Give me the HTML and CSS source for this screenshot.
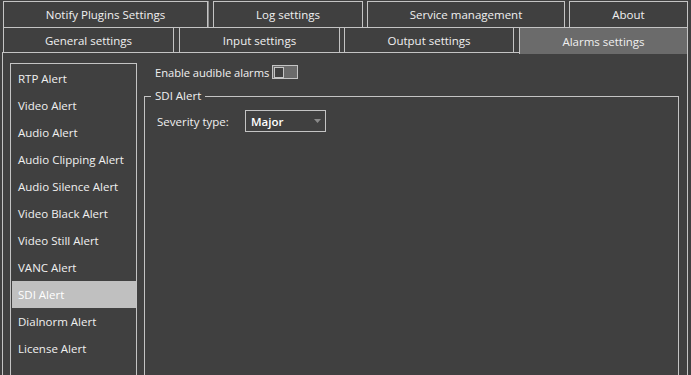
FILE: index.html
```html
<!DOCTYPE html>
<html>
<head>
<meta charset="utf-8">
<link rel="stylesheet" href="styles.css">
</head>
<body>
<div class="tabs">
  <div class="tab-row row1">
    <div class="tab t-notify">Notify Plugins Settings</div>
    <div class="tab t-log">Log settings</div>
    <div class="tab t-service">Service management</div>
    <div class="tab t-about">About</div>
  </div>
  <div class="tab-row row2">
    <div class="tab t-general">General settings</div>
    <div class="tab t-input">Input settings</div>
    <div class="tab t-output">Output settings</div>
    <div class="tab t-alarms selected">Alarms settings</div>
  </div>
</div>
<div class="pane">
  <div class="alert-list">
    <div class="item">RTP Alert</div>
    <div class="item">Video Alert</div>
    <div class="item">Audio Alert</div>
    <div class="item">Audio Clipping Alert</div>
    <div class="item">Audio Silence Alert</div>
    <div class="item">Video Black Alert</div>
    <div class="item">Video Still Alert</div>
    <div class="item">VANC Alert</div>
    <div class="item active">SDI Alert</div>
    <div class="item">Dialnorm Alert</div>
    <div class="item">License Alert</div>
  </div>
  <div class="content">
    <div class="enable-row">
      <span class="label enable-label">Enable audible alarms</span>
      <span class="toggle"><span class="knob"></span></span>
    </div>
    <fieldset class="group">
      <legend>SDI Alert</legend>
      <div class="severity-row">
        <span class="label sev-label">Severity type:</span>
        <div class="combo">
          <span class="combo-text">Major</span>
          <svg class="arrow" width="7" height="4" viewBox="0 0 7 4"><path d="M0 0 L7 0 L3.5 4 Z" fill="#8a8a8a"/></svg>
        </div>
      </div>
    </fieldset>
  </div>
</div>
</body>
</html>
```

FILE: styles.css
```css
html, body {
  margin: 0;
  padding: 0;
  background: #404040;
  overflow: hidden;
  height: 375px;
}
body {
  font-family: "Open Sans", "Noto Sans", sans-serif;
  font-size: 11.5px;
  color: #f0f0f0;
}
.tabs {
  padding-top: 1px;
}
.tab-row {
  display: flex;
  padding-left: 3px;
}
.tab {
  box-sizing: border-box;
  border: 1px solid #c4c4c4;
  background: #404040;
  display: flex;
  align-items: center;
  justify-content: center;
  white-space: nowrap;
}
.row1 .tab {
  height: 27px;
}
.row2 {
  margin-top: -1px;
}
.row2 .tab {
  height: 25px;
  border-bottom: none;
  padding-top: 1px;
}
.t-notify { width: 205px; margin-right: 5px; box-shadow: 1px 0 0 #8c8c8c; }
.t-log { width: 150px; margin-right: 4px; }
.t-service { width: 198px; margin-right: 4px; }
.t-about { width: 119px; }
.t-general { width: 171px; margin-right: 5px; }
.t-input { width: 161px; margin-right: 4px; }
.t-output { width: 170px; margin-right: 5px; }
.t-alarms { width: 169px; }
.row2 .tab.selected {
  background: #6b6b6b;
  height: 27px;
  margin-bottom: -2px;
  position: relative;
  z-index: 1;
}
.pane {
  margin-left: 2px;
  width: 686px;
  box-sizing: border-box;
  height: 323px;
  border: 1px solid #c4c4c4;
  border-bottom: none;
  padding: 10px 8px 0 7px;
  display: flex;
  gap: 7px;
}
.alert-list {
  box-sizing: border-box;
  width: 127px;
  flex: none;
  border: 1px solid #c4c4c4;
  border-bottom: none;
  padding: 1px 0 0 1px;
}
.item {
  height: 27px;
  line-height: 27px;
  padding-left: 6px;
  white-space: nowrap;
}
.item.active {
  background: #c0c0c0;
  color: #ffffff;
}
.content {
  flex: 1;
  display: flex;
  flex-direction: column;
}
.enable-row {
  display: flex;
  align-items: center;
  height: 14px;
  margin-top: 2px;
  padding-left: 11px;
  gap: 3px;
}
.enable-label {
  font-size: 11.2px;
  letter-spacing: -0.05px;
}
.toggle {
  box-sizing: border-box;
  width: 26px;
  height: 14px;
  border: 1px solid #c4c4c4;
  background: #6b6b6b;
  display: flex;
  align-items: center;
  padding-left: 1px;
}
.knob {
  box-sizing: border-box;
  width: 10px;
  height: 11px;
  border: 1px solid #c4c4c4;
  background: #404040;
}
.group {
  flex: 1;
  margin: 9px 0 0 0;
  border: 1px solid #c4c4c4;
  border-bottom: none;
  padding: 0 6px 0 6px;
  min-width: 0;
}
.group legend {
  padding: 0 4px;
  line-height: 16px;
}
.severity-row {
  display: flex;
  align-items: center;
  margin-top: 6px;
  padding-left: 6px;
}
.sev-label {
  width: 88px;
}
.combo {
  box-sizing: border-box;
  width: 81px;
  height: 22px;
  border: 1px solid #c4c4c4;
  display: flex;
  align-items: center;
  padding-left: 5px;
  padding-right: 4px;
}
.combo-text {
  flex: 1;
  font-weight: 600;
  color: #ffffff;
}
.arrow {
  display: block;
}
```
